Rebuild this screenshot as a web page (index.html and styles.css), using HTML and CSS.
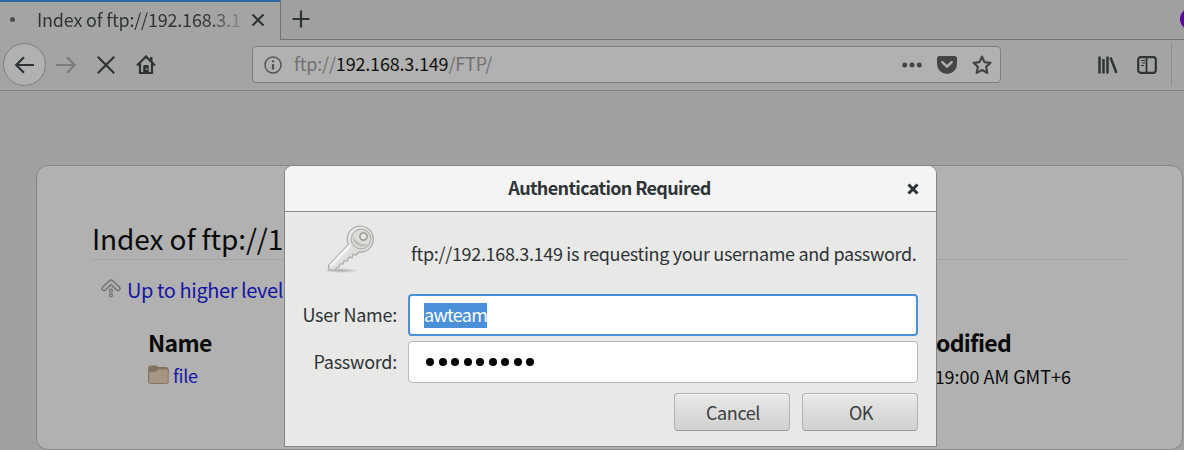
FILE: index.html
```html
<!DOCTYPE html>
<html lang="en">
<head>
  <meta charset="UTF-8">
  <meta name="viewport" content="width=device-width, initial-scale=1.0">
  <title>Index of ftp://192.168.3.149/FTP/</title>
  <link rel="stylesheet" href="styles.css">
</head>
<body>
  <div class="browser">
    <div class="tab-bar">
      <div class="tab">
        <span class="tab-dot"></span>
        <span class="tab-title">Index of ftp://192.168.3.1</span>
        <svg class="tab-close" width="14" height="14" viewBox="0 0 14 14"><path d="M1.500 1.500l11 11M12.500 1.500l-11 11"/></svg>
      </div>
      <div class="tab-rest">
        <svg class="new-tab" width="18" height="18" viewBox="0 0 18 18"><path d="M9 .5v17M.5 9h17"/></svg>
        <span class="account"></span>
      </div>
    </div>

    <div class="toolbar">
      <div class="back">
        <svg width="22" height="20" viewBox="0 0 22 20"><path d="M20 10H2.500M10 2.200L2.200 10l7.800 7.800"/></svg>
      </div>
      <svg class="forward" width="22" height="20" viewBox="0 0 22 20"><path d="M1 10h18.500M12 2.200l7.800 7.800-7.800 7.800"/></svg>
      <svg class="stop" width="20" height="20" viewBox="0 0 20 20"><path d="M1.800 1.800l16.400 16.400M18.200 1.800L1.800 18.200"/></svg>
      <svg class="home" width="20" height="20" viewBox="0 0 20 20">
        <path class="line" d="M1 10.500L10 1.500l9 9M4 8.500V18h12V8.500"/>
        <path class="fill" d="M7.200 18v-6.500q0-1.500 1.500-1.500h2.600q1.500 0 1.500 1.500V18zM14 2h2.500v5L14 4.500z"/>
        <circle class="knob" cx="10.800" cy="14" r=".9"/>
      </svg>

      <div class="url-bar">
        <svg class="info" width="18" height="18" viewBox="0 0 18 18">
          <circle cx="9" cy="9" r="8"/>
          <path d="M9 8v5.500M9 4.300v2"/>
        </svg>
        <span class="url">ftp://<b>192.168.3.149</b>/FTP/</span>
        <svg class="dots" width="20" height="6" viewBox="0 0 20 6"><circle cx="2.700" cy="3" r="2.500"/><circle cx="10" cy="3" r="2.500"/><circle cx="17.300" cy="3" r="2.500"/></svg>
        <svg class="pocket" width="20" height="18" viewBox="0 0 20 18">
          <path class="body" d="M2.500 0h15Q20 0 20 2.500V8a10 10 0 0 1-20 0V2.500Q0 0 2.500 0z"/>
          <path class="check" d="M5.300 6.200L10 10.700l4.700-4.500"/>
        </svg>
        <svg class="star" width="20" height="20" viewBox="0 0 20 20"><path d="M10 1.600l2.500 5.500 6 .7-4.400 4.100 1.200 6L10 15l-5.300 2.900 1.200-6L1.500 7.800l6-.7z"/></svg>
      </div>

      <svg class="library" width="20" height="18" viewBox="0 0 20 18"><path d="M1.500 .5v17M5.500 3v14.500M9.500 .5v17M12.500 1.500l6 15.500"/></svg>
      <svg class="sidebar-icon" width="20" height="18" viewBox="0 0 20 18">
        <rect x="1.200" y="1.200" width="17.600" height="15.600" rx="2.500"/>
        <path class="split" d="M9.500 1v16"/>
        <path class="rows" d="M4 4.500h4M5 7h3M4 9.500h3"/>
      </svg>
      <span class="separator"></span>
    </div>

    <div class="page">
      <div class="listing">
        <h1>Index of ftp://192.168.3.149/FTP/</h1>
        <div class="up">
          <svg width="20" height="20" viewBox="0 0 20 20">
            <path class="edge" d="M3 10.500L10 4l7 6.500"/>
            <path class="inner" d="M3 10.500L10 4l7 6.500"/>
            <circle cx="10" cy="12.700" r="1.500"/>
            <circle cx="10" cy="17.300" r="1.500"/>
          </svg>
          <a>Up to higher level</a>
        </div>
        <div class="files">
          <div class="column">
            <h2>Name</h2>
            <div class="file">
              <svg width="21" height="20" viewBox="0 0 21 20">
                <path class="flap" d="M.7 17V2.500Q.7 1 2.200 1h6q1.300 0 1.300 1.500h9q1.500 0 1.500 1.500v4H.7z"/>
                <path class="front" d="M.7 6.500h7l2.500-2.500h9q1 0 1 1V17q0 1.500-1.500 1.500H2.200Q.7 18.500.7 17z"/>
              </svg>
              <a>file</a>
            </div>
          </div>
          <div class="column modified">
            <h2>Last Modified</h2>
            <div class="time">19:00 AM GMT+6</div>
          </div>
        </div>
      </div>
    </div>
  </div>

  <div class="dialog">
    <div class="dialog-header">
      <span class="dialog-title">Authentication Required</span>
      <svg width="12" height="12" viewBox="0 0 12 12"><path d="M1.500 1.500l9 9M10.500 1.500l-9 9"/></svg>
    </div>
    <div class="dialog-body">
      <div class="message">
        <svg width="54" height="52" viewBox="0 0 54 52">
          <defs>
            <linearGradient id="metal" x1="0" y1="0" x2="1" y2="1">
              <stop offset="0" stop-color="#fafaf9"/>
              <stop offset=".6" stop-color="#dcddd9"/>
              <stop offset="1" stop-color="#f4f4f2"/>
            </linearGradient>
            <radialGradient id="shade">
              <stop offset="0" stop-color="#8c8c89" stop-opacity=".7"/>
              <stop offset="1" stop-color="#8c8c89" stop-opacity="0"/>
            </radialGradient>
          </defs>
          <ellipse class="shadow" cx="16" cy="46.500" rx="18" ry="2.500"/>
          <path class="key" d="M23.500 20.500A13 13 0 1 1 34 28L30.500 31.500l-2.500-1.500-1 4-3-1-2 4-3 0-1 3-3 0-1 3-2.500 1-1 2-6.500 0-.5-4.500z"/>
          <path class="shine" d="M25 21.500L5.500 42"/>
          <circle class="ring" cx="36" cy="15" r="9.800"/>
          <path class="bow" d="M28 13a9 9 0 0 0 16 6Q37 24 28 13z"/>
          <circle class="hole" cx="38.500" cy="12.500" r="3.600"/>
        </svg>
        <p>ftp://192.168.3.149 is requesting your username and password.</p>
      </div>
      <div class="field">
        <label>User Name:</label>
        <div class="input focused"><span class="selected">awteam</span></div>
      </div>
      <div class="field">
        <label>Password:</label>
        <div class="input password">
          <i></i><i></i><i></i><i></i><i></i><i></i><i></i><i></i><i></i>
        </div>
      </div>
      <div class="buttons">
        <button>Cancel</button>
        <button>OK</button>
      </div>
    </div>
  </div>
</body>
</html>
```
FILE: styles.css
```css
* {
  box-sizing: border-box;
}

body {
  margin: 0;
  position: relative;
  width: 1184px;
  height: 450px;
  overflow: hidden;
  background: #a0a0a0;
  font-family: "Noto Sans CJK SC", "Noto Sans", sans-serif;
  font-size: 18px;
  color: #2e3436;
}

svg {
  display: block;
  flex: none;
  fill: none;
  stroke: #2e3436;
  stroke-width: 2.2;
}

/* Tabs */
.tab-bar {
  display: flex;
  height: 40px;
}

.tab {
  display: flex;
  align-items: center;
  width: 280px;
  padding: 0 14px 3px 10px;
  background: #a4a4a2;
  border-top: 2px solid #2f65a0;
}

.tab-dot {
  width: 5px;
  height: 5px;
  border-radius: 50%;
  background: #4c4f50;
}

.tab-title {
  width: 208px;
  margin: -2px 6px 0 22px;
  line-height: 34px;
  letter-spacing: -0.2px;
  white-space: nowrap;
  overflow: hidden;
  color: transparent;
  background: linear-gradient(to right, #2e3436 82%, #a4a4a2 102%);
  background-clip: text;
}

.tab-close {
  stroke-width: 2;
}

.tab-rest {
  display: flex;
  align-items: center;
  flex: 1;
  padding: 0 0 2px 11px;
  border-left: 1px solid #727270;
  border-bottom: 1px solid #727270;
  overflow: hidden;
}

.account {
  flex: none;
  width: 22px;
  height: 22px;
  margin-left: auto;
  margin-right: -18px;
  border-radius: 50%;
  background: #5a00a0;
}

/* Toolbar */
.toolbar {
  display: flex;
  align-items: center;
  height: 51px;
  padding: 0 12px 1px 3px;
  background: #a4a4a2;
  border-bottom: 1px solid #838381;
}

.back {
  display: flex;
  align-items: center;
  justify-content: center;
  width: 43px;
  height: 43px;
  border: 1px solid #7d7d7b;
  border-radius: 50%;
  background: #b1b1b1;
}

.forward {
  margin-left: 9px;
  stroke: #7a7d7d;
}

.stop {
  margin-left: 19px;
}

.home {
  margin-left: 20px;
}

.home .fill {
  fill: #2e3436;
  stroke: none;
}

.home .knob {
  fill: #a4a4a2;
  stroke: none;
}

.url-bar {
  display: flex;
  align-items: center;
  width: 749px;
  height: 37px;
  margin-left: 96px;
  padding: 0 8px 0 11px;
  border: 1px solid #7f7f7d;
  border-radius: 4px;
  background: #b1b1b1;
}

.info {
  stroke: #555;
  stroke-width: 1.5;
}

.info path {
  stroke-width: 2.2;
}

.url {
  flex: 1;
  margin: -3px 0 0 12px;
  line-height: 30px;
  letter-spacing: -0.18px;
  color: #707070;
}

.url b {
  font-weight: 400;
  color: #111;
}

.dots {
  fill: #454545;
  stroke: none;
}

.pocket {
  margin-left: 15px;
  stroke: none;
}

.pocket .body {
  fill: #454545;
}

.pocket .check {
  stroke: #b1b1b1;
  stroke-width: 2.4;
  stroke-linecap: round;
}

.star {
  margin-left: 15px;
  stroke: #454545;
  stroke-linejoin: round;
}

.library {
  margin-left: 97px;
  stroke-width: 2.5;
}

.sidebar-icon {
  margin-left: 19px;
}

.sidebar-icon .split {
  stroke-width: 1.8;
}

.sidebar-icon .rows {
  stroke-width: 1.2;
}

.separator {
  width: 1px;
  height: 43px;
  margin-left: auto;
  background: #8d8d8b;
}

/* FTP listing */
.page {
  padding: 74px 1px 0 36px;
}

.listing {
  height: 285px;
  padding: 55px 54px 0 55px;
  border: 1px solid #868686;
  border-radius: 12px;
  background: #b1b1b1;
  color: #0a0a0a;
}

.listing h1 {
  width: 1036px;
  height: 39px;
  margin: 0;
  border-bottom: 1px solid #a4a4a4;
  font-size: 28px;
  font-weight: 400;
  letter-spacing: -0.1px;
  line-height: 34px;
  white-space: nowrap;
}

.listing a {
  color: #1616a5;
}

.up {
  display: flex;
  align-items: center;
  height: 28px;
  margin-top: 16px;
  padding-left: 9px;
  font-size: 20px;
  letter-spacing: -0.42px;
  line-height: 28px;
}

.up svg {
  margin: -5px 6px 0 0;
}

.up .edge {
  stroke: #72726f;
  stroke-width: 5.400;
  stroke-linecap: round;
  stroke-linejoin: round;
}

.up .inner {
  stroke: #acacaa;
  stroke-width: 2.800;
  stroke-linecap: round;
  stroke-linejoin: round;
}

.up circle {
  stroke: #72726f;
  stroke-width: 1.3;
}

.files {
  display: flex;
  justify-content: space-between;
  margin-top: 22px;
  padding: 0 57px 0 56px;
}

.files h2 {
  margin: 0;
  font-size: 23px;
  font-weight: 700;
  letter-spacing: -0.7px;
  line-height: 33px;
}

.file {
  display: flex;
  align-items: center;
  height: 32px;
  letter-spacing: -0.3px;
  line-height: 32px;
}

.file svg {
  margin-right: 4px;
}

.file .flap {
  fill: #81745f;
  stroke: #7d6f5c;
  stroke-width: 1;
}

.file .front {
  fill: #a39684;
  stroke: #86785f;
  stroke-width: 1;
}

.modified {
  text-align: right;
}

.modified h2 {
  margin-right: 60px;
}

.time {
  line-height: 34px;
}

/* Login dialog, over the page */
.dialog {
  position: absolute;
  left: 284px;
  top: 165px;
  width: 653px;
  height: 282px;
  border: 1px solid #858583;
  border-radius: 9px 9px 0 0;
  background: #e8e8e6;
  overflow: hidden;
}

.dialog-header {
  display: flex;
  align-items: center;
  height: 46px;
  padding: 0 17px 0 27px;
  border-bottom: 1px solid #898985;
  background: #f4f4f4;
}

.dialog-title {
  flex: 1;
  text-align: center;
  font-weight: 700;
  letter-spacing: -0.65px;
  line-height: 40px;
  padding-bottom: 4px;
}

.dialog-header svg {
  stroke-width: 3;
}

.dialog-body {
  padding: 12px 18px 0 17px;
}

.message {
  display: flex;
  height: 70px;
  padding-left: 23px;
}

.message p {
  margin: 13px 0 0 32px;
  letter-spacing: -0.33px;
  line-height: 32px;
  white-space: nowrap;
}

.shadow {
  fill: url(#shade);
  stroke: none;
}

.key {
  fill: url(#metal);
  stroke: #a9a9a6;
  stroke-width: 1.2;
  stroke-linejoin: round;
}

.shine {
  stroke: #f5f5f4;
  stroke-width: 3;
}

.ring {
  fill: #dcddd8;
  stroke: #b0b1ad;
  stroke-width: 1.2;
}

.bow {
  fill: #bcbdb8;
  stroke: none;
}

.hole {
  fill: #e4e4e2;
  stroke: #a2a29f;
  stroke-width: 1.8;
}

.field {
  display: flex;
  align-items: center;
  height: 42px;
  margin-bottom: 5px;
}

.field label {
  width: 95px;
  margin: -3px 11px 0 0;
  letter-spacing: -0.25px;
  text-align: right;
  white-space: nowrap;
}

.input {
  display: flex;
  align-items: center;
  flex: 1;
  height: 42px;
  padding-left: 15px;
  border: 1px solid #b6b6b3;
  border-radius: 4px;
  background: #fff;
}

.input.focused {
  padding-left: 14px;
  border: 2px solid #4a90d9;
}

.selected {
  height: 25px;
  background: #4a90d9;
  color: #fff;
  letter-spacing: -0.75px;
  line-height: 22px;
}

.password {
  gap: 4.500px;
  padding-left: 17px;
}

.password i {
  width: 8px;
  height: 8px;
  border-radius: 50%;
  background: #000;
}

.buttons {
  display: flex;
  justify-content: flex-end;
  gap: 12px;
  margin-top: 10px;
}

.buttons button {
  width: 116px;
  height: 38px;
  padding: 0 0 0 2px;
  border: 1px solid #b2b2ae;
  border-bottom-color: #9c9c98;
  border-radius: 4px;
  background: linear-gradient(#e9e9e8, #d0d0ce);
  box-shadow: inset 0 1px #f3f3f2;
  color: #3a4042;
  font: inherit;
  letter-spacing: -0.4px;
  line-height: 32px;
}
```
